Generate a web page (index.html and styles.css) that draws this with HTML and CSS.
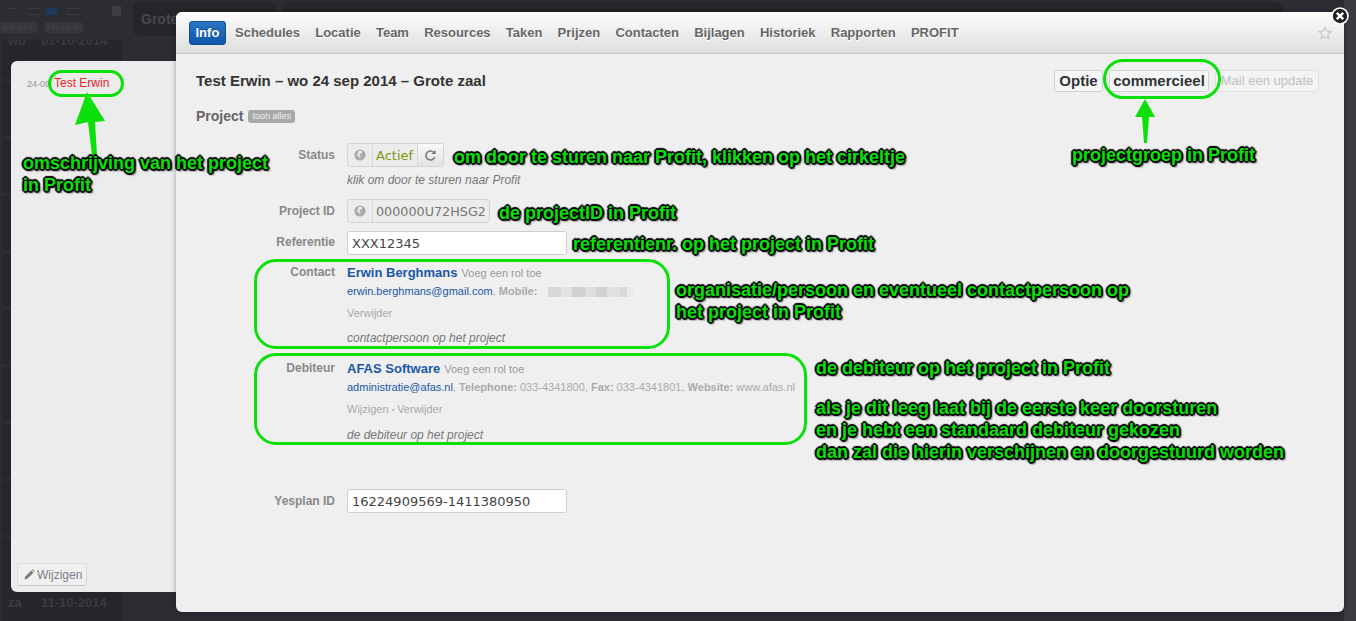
FILE: index.html
```html
<!DOCTYPE html>
<html lang="nl">
<head>
<meta charset="utf-8">
<title>Project</title>
<link rel="stylesheet" href="styles.css">
</head>
<body>
<div class="backdrop">
  <aside class="bg-side">
    <div class="bg-head">
      <div class="bg-tools">
        <span class="bg-ic i1"></span><span class="bg-ic i2"></span><span class="bg-ic sel"></span><span class="bg-ic i4"></span>
        <span class="bg-cal"></span>
      </div>
      <div class="bg-pills"><span class="bg-pill">DRAFT</span><span class="bg-pill">FILTER</span></div>
    </div>
    <div class="bg-card first"><span class="bg-day">wo</span>01-10-2014</div>
    <div class="bg-card"></div>
    <div class="bg-card"></div>
    <div class="bg-card"></div>
    <div class="bg-card"></div>
    <div class="bg-card"></div>
    <div class="bg-card"></div>
    <div class="bg-card"></div>
    <div class="bg-card"></div>
    <div class="bg-card"></div>
    <div class="bg-card last"><span class="bg-day">za</span>11-10-2014</div>
  </aside>
  <main class="bg-main">
    <div class="bg-tab">Grote</div>
    <div class="bg-tab wide"></div>
  </main>
  <div class="bg-edge"></div>
</div>

<section class="list-panel">
  <div class="list-row"><span class="list-date">24-09</span><span class="list-name">Test Erwin</span></div>
  <button class="edit-btn" type="button">
    <svg class="pencil" viewBox="0 0 12 12" width="11" height="11"><path d="M0.5 11.5l0.8-3.2 6.6-6.6 2.4 2.4-6.6 6.6z" fill="#7d7d7d"/><path d="M8.6 1l1-0.8 2.2 2.2-0.8 1z" fill="#7d7d7d"/></svg>
    Wijzigen
  </button>
</section>

<section class="modal">
  <nav class="tabs">
    <a class="tab active">Info</a>
    <a class="tab">Schedules</a>
    <a class="tab">Locatie</a>
    <a class="tab">Team</a>
    <a class="tab">Resources</a>
    <a class="tab">Taken</a>
    <a class="tab">Prijzen</a>
    <a class="tab">Contacten</a>
    <a class="tab">Bijlagen</a>
    <a class="tab">Historiek</a>
    <a class="tab">Rapporten</a>
    <a class="tab">PROFIT</a>
    <svg class="star" viewBox="0 0 16 16" width="14" height="14"><path d="M8 1.2l2 4.6 5 .5-3.8 3.3 1.1 4.9L8 12l-4.3 2.5 1.1-4.9L1 6.3l5-.5z" fill="none" stroke="#c4c4c4" stroke-width="1.2"/></svg>
  </nav>
  <div class="content">
    <header class="title-row">
      <h1 class="title">Test Erwin – wo 24 sep 2014 – Grote zaal</h1>
      <div class="actions">
        <button class="act optie" type="button">Optie</button>
        <button class="act comm" type="button">commercieel</button>
        <button class="act off" type="button">Mail een update</button>
      </div>
    </header>
    <div class="section-head"><h2 class="section">Project</h2><span class="badge">toon alles</span></div>

    <div class="row status-row">
      <div class="label">Status</div>
      <div class="val">
        <div class="field">
          <span class="cell globe-cell"><svg class="globe" viewBox="0 0 14 14" width="12" height="12"><circle cx="7" cy="7" r="6.5" fill="#a9a9a9"/><path d="M5 2.5c2-1 4-.5 5 .5l-1 2-2 .5-.5 2 1.5 1-1 2.500-1.500-2-2-1.500z" fill="#e8e8e8"/></svg></span>
          <span class="cell mono green">Actief</span>
          <span class="cell refresh"><svg viewBox="0 0 14 14" width="13" height="13"><path d="M11.500 8.500a4.800 4.800 0 1 1-.8-4.500" fill="none" stroke="#777" stroke-width="1.700"/><path d="M12.500 1v4.500H8z" fill="#777"/></svg></span>
        </div>
        <p class="hint first-hint">klik om door te sturen naar Profit</p>
      </div>
    </div>

    <div class="row id-row">
      <div class="label">Project ID</div>
      <div class="val">
        <div class="field">
          <span class="cell globe-cell"><svg class="globe" viewBox="0 0 14 14" width="12" height="12"><circle cx="7" cy="7" r="6.5" fill="#a9a9a9"/><path d="M5 2.5c2-1 4-.5 5 .5l-1 2-2 .5-.5 2 1.5 1-1 2.500-1.500-2-2-1.500z" fill="#e8e8e8"/></svg></span>
          <span class="cell mono grey">000000U72HSG2</span>
        </div>
      </div>
    </div>

    <div class="row ref-row">
      <div class="label">Referentie</div>
      <div class="val"><input class="input" type="text" value="XXX12345"></div>
    </div>

    <div class="row contact-row">
      <div class="label">Contact</div>
      <div class="val">
        <div class="name-line"><a class="name">Erwin Berghmans</a> <span class="role">Voeg een rol toe</span></div>
        <div class="info-line"><a class="mail">erwin.berghmans@gmail.com</a>, <b>Mobile:</b> <span class="blur"></span></div>
        <div class="link-line">Verwijder</div>
        <p class="hint">contactpersoon op het project</p>
      </div>
    </div>

    <div class="row debtor-row">
      <div class="label">Debiteur</div>
      <div class="val">
        <div class="name-line"><a class="name">AFAS Software</a> <span class="role">Voeg een rol toe</span></div>
        <div class="info-line"><a class="mail">administratie@afas.nl</a>, <b>Telephone:</b> 033-4341800, <b>Fax:</b> 033-4341801, <b>Website:</b> www.afas.nl</div>
        <div class="link-line">Wijzigen <span class="dot">•</span> Verwijder</div>
        <p class="hint">de debiteur op het project</p>
      </div>
    </div>

    <div class="row yesplan-row">
      <div class="label">Yesplan ID</div>
      <div class="val"><input class="input" type="text" value="16224909569-1411380950"></div>
    </div>
  </div>
</section>

<svg class="close" viewBox="0 0 18 18" width="18" height="18"><circle cx="9" cy="9" r="8" fill="#222" stroke="#fff" stroke-width="1.6"/><path d="M5.800 5.800l6.400 6.400M12.200 5.800l-6.400 6.400" stroke="#fff" stroke-width="2.400"/></svg>

<div class="ring r1"></div>
<div class="ring r2"></div>
<div class="ring r3"></div>
<div class="ring r4"></div>

<svg class="arrow a1" viewBox="0 0 32 64" width="32" height="64"><path d="M12 0L0 33l13-3 4 33h5L20 30l10-1z" fill="#0be00b"/></svg>
<svg class="arrow a2" viewBox="0 0 20 46" width="20" height="46"><path d="M10 1L0 19h7l2 26h3l2-26h6z" fill="#0be00b"/></svg>

<div class="note n1">omschrijving van het project<br>in Profit</div>
<div class="note n2">om door te sturen naar Profit, klikken op het cirkeltje</div>
<div class="note n3">projectgroep in Profit</div>
<div class="note n4">de projectID in Profit</div>
<div class="note n5">referentienr. op het project in Profit</div>
<div class="note n6">organisatie/persoon en eventueel contactpersoon op<br>het project in Profit</div>
<div class="note n7">de debiteur op het project in Profit</div>
<div class="note n8">als je dit leeg laat bij de eerste keer doorsturen<br>en je hebt een standaard debiteur gekozen<br>dan zal die hierin verschijnen en doorgestuurd worden</div>
</body>
</html>
```
FILE: styles.css
```css
* { box-sizing: border-box; }
html, body { margin: 0; height: 100%; overflow: hidden; }
body {
  position: relative;
  width: 1356px;
  height: 621px;
  background: #2c2d32;
  font-family: "Liberation Sans", Arial, sans-serif;
  color: #333;
}

/* dimmed application behind the dialogs */
.backdrop { display: flex; height: 621px; }
.bg-side { width: 122px; padding: 0 0 0 2px; flex: none; }
.bg-head { height: 40px; margin-left: -2px; border-right: 1px solid transparent; }
.bg-tools { display: flex; align-items: center; height: 22px; padding-left: 8px; }
.bg-ic { height: 7px; border-top: 1px solid #3c3d42; }
.i1 { width: 8px; margin-top: 0; }
.i2 { width: 12px; margin-left: 14px; border-bottom: 1px solid #3c3d42; }
.sel { width: 12px; margin-left: 7px; border-top: 2px solid #1d3a5c; border-bottom: 2px solid #1d3a5c; background: #1d3a5c; }
.i4 { width: 16px; margin-left: 9px; border-bottom: 1px solid #3c3d42; }
.bg-cal { width: 10px; height: 10px; background: #3c3d42; margin-left: 33px; }
.bg-pills { display: flex; gap: 6px; height: 11px; }
.bg-pill { padding: 0 3px; font-size: 8px; line-height: 11px; height: 11px; letter-spacing: 1px; color: #47484c; background: #36373b; border-radius: 3px; }
.bg-card { height: 54px; margin: 0 0 3px; background: #25262a; border-radius: 4px; font-size: 13px; font-weight: bold; color: #3a3b40; padding: 0 6px; overflow: hidden; white-space: nowrap; }
.bg-day { display: inline-block; width: 33px; }
.bg-card.first { height: 39px; line-height: 0; padding-top: 1px; border-radius: 0 0 4px 4px; }
.bg-card.last { margin-top: -3px; height: 40px; line-height: 22px; }
.bg-main { display: flex; gap: 5px; flex: 1; padding: 2px 0 0 11px; }
.bg-tab { width: 144px; height: 34px; background: #25262a; border-radius: 6px; color: #48494d; font-weight: bold; font-size: 14px; line-height: 34px; padding-left: 8px; }
.bg-tab.wide { width: 1000px; }
.bg-edge { width: 12px; flex: none; background: #3a3b3f; }

/* list panel */
.list-panel {
  position: absolute;
  left: 11px; top: 61px;
  width: 170px; height: 531px;
  background: #ececec;
  border-radius: 6px 0 0 6px;
  padding: 0 0 0 16px;
}
.list-row { display: flex; align-items: baseline; gap: 4px; padding-top: 15px; }
.list-date { font-size: 9px; color: #8e94a0; width: 23px; overflow: hidden; white-space: nowrap; }
.list-name { font-size: 12px; color: #e4262c; }
.edit-btn {
  position: absolute;
  left: 6px; bottom: 6px;
  display: flex; align-items: center; gap: 2px;
  width: 70px; height: 23px;
  padding: 0 0 0 6px;
  font: 12px "Liberation Sans", Arial, sans-serif;
  color: #7a7f8a;
  background: #f0f0f0;
  border: 1px solid #dcdcdc;
  border-bottom-color: #c8c8c8;
  border-radius: 3px;
}

/* main dialog */
.modal {
  position: absolute;
  left: 176px; top: 12px;
  width: 1168px; height: 600px;
  background: #efefef;
  border-radius: 6px;
  box-shadow: 0 0 5px rgba(0,0,0,.35);
  overflow: hidden;
}
.tabs {
  display: flex; align-items: center;
  height: 42px;
  padding: 0 13px;
  gap: 15.2px;
  background: linear-gradient(#fdfdfd, #dedede);
  border-bottom: 1px solid #c8c8c8;
}
.tab { font-size: 13px; font-weight: bold; color: #666; text-shadow: 0 1px 0 #fff; }
.tab.active {
  margin-right: -6px;
  padding: 0 5.5px;
  height: 24px; line-height: 22px;
  color: #fff;
  text-shadow: 0 -1px 0 #0d4a92;
  background: linear-gradient(#2a75c4, #0f56a8);
  border: 1px solid #0e4d98;
  border-radius: 3px;
}
.star { margin-left: auto; margin-right: -1px; }

.content { padding: 0 25px 0 20px; }
.title-row { display: flex; justify-content: space-between; align-items: center; height: 53px; }
.title { margin: 0; font-size: 15px; font-weight: bold; color: #333; }
.actions { display: flex; gap: 6px; }
.act {
  height: 22px;
  padding: 0;
  font: bold 15px "Liberation Sans", Arial, sans-serif;
  color: #333;
  background: #f5f6f8;
  border: 1px solid #d2d2d2;
  border-radius: 3px;
}
.optie { width: 49px; }
.comm { width: 100px; }
.act.off { font-weight: normal; font-size: 13px; color: #c0c0c0; background: #f3f3f3; border-color: #e0e0e0; width: 104px; }
.section-head { display: flex; align-items: center; gap: 5px; height: 18px; margin-bottom: 18px; }
.section { margin: 0; font-size: 14px; font-weight: bold; color: #666; }
.badge { font-size: 9px; line-height: 13px; height: 13px; padding: 0 4px; color: #eee; background: #a9a9a9; border-radius: 3px; }

.row { display: grid; grid-template-columns: 139px 1fr; column-gap: 12px; }
.label { font-size: 12px; font-weight: bold; color: #888; text-align: right; }
.status-row .label { padding-top: 5px; }
.id-row { margin-top: 12px; }
.id-row .label { padding-top: 5px; }
.ref-row { margin-top: 8px; }
.ref-row .label { padding-top: 4px; }
.contact-row { margin-top: 10px; }
.debtor-row { margin-top: 16px; }
.yesplan-row { margin-top: 47px; }
.yesplan-row .label { padding-top: 5px; }

.field { display: inline-flex; height: 24px; border: 1px solid #d4d4d4; border-radius: 3px; background: #ececec; }
.cell { display: flex; align-items: center; border-left: 1px solid #d8d8d8; }
.cell:first-child { border-left: 0; }
.globe-cell { width: 24px; justify-content: center; }
.mono { font-family: "DejaVu Sans", sans-serif; font-size: 13px; padding: 0 0 0 3px; white-space: nowrap; }
.green { color: #7a9a12; width: 45px; }
.grey { color: #777; width: 117px; font-size: 12.75px; }
.refresh { width: 26px; justify-content: center; background: linear-gradient(#f8f8f8, #e2e2e2); }

.hint { margin: 0; font-size: 12px; font-style: italic; color: #777; }
.first-hint { margin-top: 6px; }
.input {
  display: block;
  width: 220px; height: 24px;
  padding: 0 4px;
  font: 13px "DejaVu Sans", sans-serif;
  color: #444;
  background: #fff;
  border: 1px solid #cfcfcf;
  border-radius: 3px;
}
.name-line { display: flex; align-items: baseline; gap: 4px; height: 18px; }
.name { font-size: 13px; font-weight: bold; color: #1a57ab; }
.role { font-size: 11px; color: #999; }
.info-line { margin-top: 1px; font-size: 11px; line-height: 14px; color: #aaa; }
.info-line b { color: #aaa; }
.mail { color: #1a57ab; }
.blur { display: inline-block; width: 92px; height: 10px; margin-left: 1px; vertical-align: -2px; background: linear-gradient(90deg, #efefef 0 8%, #d8d8d8 8% 22%, #e2e2e2 22% 34%, #d0d0d0 34% 48%, #dedede 48% 60%, #d2d2d2 60% 72%, #e0e0e0 72% 86%, #d8d8d8 86% 94%, #eaeaea 94%); }
.link-line { margin-top: 8px; font-size: 11px; line-height: 14px; color: #aaa; }
.dot { font-size: 7px; vertical-align: 1px; }
.link-line + .hint { margin-top: 11px; line-height: 14px; }

/* annotations */
.ring { position: absolute; border: 3px solid #0be00b; }
.r1 { left: 48px; top: 70px; width: 76px; height: 27px; border-radius: 14px; }
.r2 { left: 1103px; top: 59px; width: 118px; height: 40px; border-radius: 20px; }
.r3 { left: 254px; top: 259px; width: 416px; height: 90px; border-radius: 22px; }
.r4 { left: 254px; top: 353px; width: 553px; height: 92px; border-radius: 22px; }
.arrow { position: absolute; }
.a1 { left: 75px; top: 92px; }
.a2 { left: 1135px; top: 98px; }
.close { position: absolute; left: 1331px; top: 7px; }
.note {
  position: absolute;
  font-size: 18px;
  font-weight: bold;
  line-height: 22px;
  color: #08e008;
  white-space: nowrap;
  text-shadow: -1px -1px 1px #000, 1px -1px 1px #000, -1px 1px 1px #000, 1px 1px 1px #000, 0 -2px 1px #000, 0 2px 1px #000, -2px 0 1px #000, 2px 0 1px #000, 2px 2px 2px rgba(0,0,0,.7);
}
.n1 { left: 23px; top: 152px; }
.n2 { left: 454px; top: 146px; }
.n3 { left: 1072px; top: 144px; }
.n4 { left: 499px; top: 202px; }
.n5 { left: 573px; top: 233px; }
.n6 { left: 676px; top: 279px; }
.n7 { left: 816px; top: 357px; }
.n8 { left: 816px; top: 397px; }
```
